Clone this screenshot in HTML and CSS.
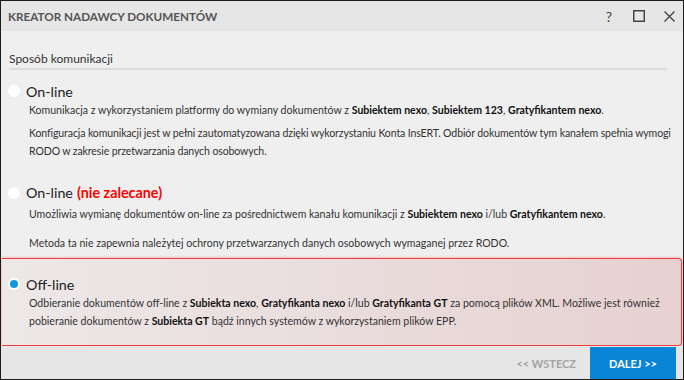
FILE: index.html
```html
<!DOCTYPE html>
<html lang="pl">
<head>
  <meta charset="UTF-8">
  <title>Kreator nadawcy dokumentów</title>
  <link rel="stylesheet" href="styles.css">
</head>
<body>
  <div class="window">
    <div class="titlebar">
      <span class="title">KREATOR NADAWCY DOKUMENTÓW</span>
      <div class="controls">
        <span class="ctl help">?</span>
        <span class="ctl"><svg width="12" height="12" viewBox="0 0 12 12"><rect x="0.75" y="0.75" width="10.5" height="10.5" fill="none" stroke="#444" stroke-width="1.5"/></svg></span>
        <span class="ctl"><svg width="11" height="11" viewBox="0 0 11 11"><path d="M0.5 0.5 L10.5 10.5 M10.5 0.5 L0.5 10.5" stroke="#444" stroke-width="1.4"/></svg></span>
      </div>
    </div>

    <div class="content">
      <div class="section">Sposób komunikacji</div>

      <div class="option first">
        <div class="opt-head"><span class="radio"></span>On-line</div>
        <p>Komunikacja z wykorzystaniem platformy do wymiany dokumentów z <b>Subiektem nexo</b>, <b>Subiektem 123</b>, <b>Gratyfikantem nexo</b>.</p>
        <p class="gap tight">Konfiguracja komunikacji jest w pełni zautomatyzowana dzięki wykorzystaniu Konta InsERT. Odbiór dokumentów tym kanałem spełnia wymogi<br>RODO w zakresie przetwarzania danych osobowych.</p>
      </div>

      <div class="option second">
        <div class="opt-head"><span class="radio"></span>On-line <b class="warn">(nie zalecane)</b></div>
        <p>Umożliwia wymianę dokumentów on-line za pośrednictwem kanału komunikacji z <b>Subiektem nexo</b> i/lub <b>Gratyfikantem nexo</b>.</p>
        <p class="gap">Metoda ta nie zapewnia należytej ochrony przetwarzanych danych osobowych wymaganej przez RODO.</p>
      </div>

      <div class="option selected">
        <div class="opt-head"><span class="radio on"></span>Off-line</div>
        <p>
          <span class="line">Odbieranie dokumentów off-line z <b>Subiekta nexo</b>, <b>Gratyfikanta nexo</b> i/lub <b>Gratyfikanta GT</b> za pomocą plików XML. Możliwe jest również</span>
          <span class="line">pobieranie dokumentów z <b>Subiekta GT</b> bądź innych systemów z wykorzystaniem plików EPP.</span>
        </p>
      </div>
    </div>

    <div class="footer">
      <span class="back">&lt;&lt; WSTECZ</span>
      <span class="next">DALEJ &gt;&gt;</span>
    </div>
  </div>
</body>
</html>
```

FILE: styles.css
```css
body {
  margin: 0;
  font-family: Lato, "Open Sans", sans-serif;
  color: #333;
}
.window {
  width: 684px;
  height: 380px;
  box-sizing: border-box;
  border: 1px solid #1c1c1c;
  background-color: #efefef;
  display: flex;
  flex-direction: column;
  overflow: hidden;
}
.titlebar {
  flex-shrink: 0;
  height: 30px;
  background-color: #e6e6e6;
  display: flex;
  align-items: center;
  justify-content: space-between;
  padding: 0 8px 0 7px;
}
.title {
  font-size: 11.7px;
  font-weight: 700;
  color: #555;
}
.controls {
  display: flex;
  gap: 19px;
  align-items: center;
}
.ctl {
  height: 12px;
  display: flex;
  align-items: center;
  justify-content: center;
}
.help {
  font-size: 14px;
  color: #444;
  margin-right: 2px;
}
.content {
  flex: 1;
  min-height: 0;
  padding: 0 16px 0 1px;
}
.section {
  font-size: 12px;
  margin: 20px 0 0 7px;
  padding-bottom: 2px;
  border-bottom: 2px solid #dcdcdc;
}
.option {
  padding: 11px 0 0 6px;
}
.option.second {
  padding-top: 20px;
}
.opt-head {
  display: flex;
  align-items: center;
  font-size: 14.3px;
  color: #222;
  height: 20px;
}
.second .opt-head {
  height: 25px;
}
.radio {
  width: 12px;
  height: 12px;
  border-radius: 50%;
  background-color: #fff;
  margin-right: 6px;
  display: flex;
  align-items: center;
  justify-content: center;
}
.radio.on::after {
  content: "";
  width: 8px;
  height: 8px;
  border-radius: 50%;
  background-color: #0f9ae0;
}
.warn {
  color: #f00;
  margin-left: 4px;
}
.option p {
  font-size: 10.55px;
  line-height: 18px;
  margin: 0 -22px 0 21px;
  color: #333;
}
.option p b {
  color: #111;
}
.option p.tight {
  letter-spacing: -0.12px;
  white-space: nowrap;
}
.first p.gap {
  margin-top: 5px;
}
.second p.gap {
  margin-top: 11px;
}
.option.selected {
  margin: 6px -15px 0 0;
  height: 88px;
  box-sizing: border-box;
  padding: 15px 0 0 6px;
  border: 1px solid #f03c3c;
  border-left: none;
  border-radius: 0 4px 4px 0;
  background: linear-gradient(to right, #ede8e8, #e7d1d1);
  box-shadow: 0 0 3px rgba(240, 60, 60, 0.5);
}
.selected p {
  margin-right: 0;
}
.line {
  display: block;
  white-space: nowrap;
}
.footer {
  flex-shrink: 0;
  height: 32px;
  background-color: #e6e6e6;
  display: flex;
  justify-content: flex-end;
  align-items: stretch;
  gap: 14px;
  padding: 1px 7px 0 0;
}
.back {
  font-size: 11px;
  font-weight: 700;
  color: #a3a3a3;
  display: flex;
  align-items: center;
}
.next {
  width: 86px;
  background-color: #0a84d6;
  color: #fff;
  font-size: 11px;
  font-weight: 700;
  display: flex;
  align-items: center;
  justify-content: center;
}
```
